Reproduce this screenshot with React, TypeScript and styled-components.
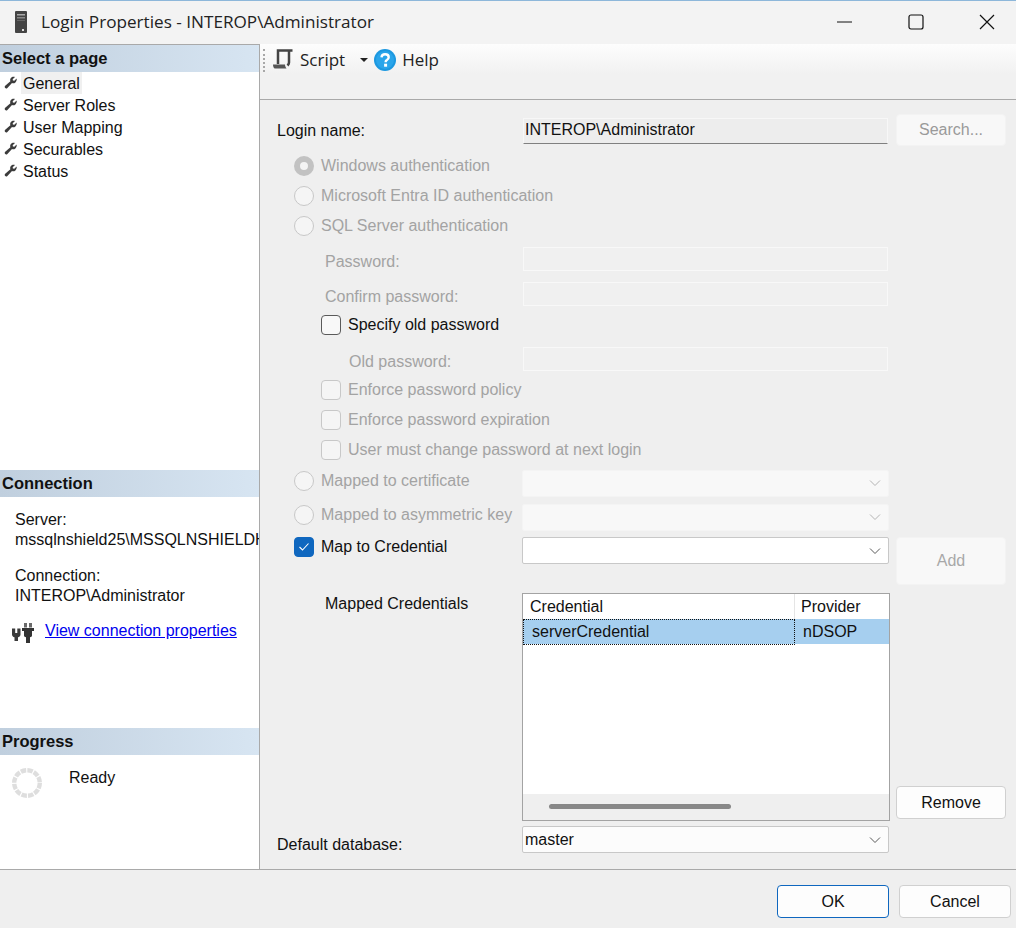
import React from "react";
import styled, { createGlobalStyle } from "styled-components";

const GlobalStyle = createGlobalStyle`
  html, body {
    margin: 0;
    padding: 0;
    background: #efefef;
  }
  * {
    box-sizing: border-box;
  }
`;

const PAGES = ["General", "Server Roles", "User Mapping", "Securables", "Status"];

function WrenchIcon() {
  return (
    <svg width="14" height="14" viewBox="0 0 14 14">
      <path
        d="M12.6 2.6 10.3 4.8 8.9 4.6 8.7 3.3 11 1.1C9.5.5 7.8.9 6.9 2 6.1 3 6 4.2 6.4 5.3L1.2 9.8C.5 10.5.6 11.5 1.2 12.1 1.8 12.7 2.8 12.7 3.4 12L8 7.1C9.2 7.5 10.5 7.2 11.4 6.4 12.5 5.4 13 3.9 12.6 2.6Z"
        fill="#3c3c3c"
      />
    </svg>
  );
}

function ServerIcon() {
  return (
    <svg width="14" height="24" viewBox="0 0 14 24">
      <rect x="1" y="1" width="12" height="22" rx="1" fill="#444" />
      <rect x="3" y="4" width="8" height="1.5" fill="#aaa" />
      <rect x="3" y="7" width="8" height="1.5" fill="#888" />
      <rect x="3" y="10" width="8" height="1" fill="#666" />
      <rect x="8" y="19" width="2" height="2" fill="#ddd" />
    </svg>
  );
}

function ScriptIcon() {
  return (
    <svg width="22" height="22" viewBox="0 0 22 22">
      <path d="M6 15V1.500H20.500" fill="none" stroke="#444" strokeWidth="2.500" />
      <path d="M17 2V13.500C17 14.500 16.500 15.500 15.500 16.500" fill="none" stroke="#444" strokeWidth="2.500" />
      <path d="M1 15.500H13C13 17 13.500 18 14.500 19.500H3C1.800 19.500 1 17.500 1 15.500Z" fill="#555" />
    </svg>
  );
}

function HelpIcon() {
  return (
    <svg width="22" height="22" viewBox="0 0 22 22">
      <circle cx="11" cy="11" r="11" fill="#1c98e0" />
      <circle cx="11" cy="11" r="9" fill="#2aa5ea" />
      <path
        d="M7.500 8.300C7.700 6.300 9.200 5.200 11.100 5.200 13.200 5.200 14.700 6.400 14.700 8.200 14.700 9.500 14 10.300 12.900 11 11.900 11.600 11.600 12.100 11.600 13.200"
        fill="none"
        stroke="#fff"
        strokeWidth="2.400"
      />
      <rect x="10.100" y="14.700" width="3" height="3" fill="#fff" />
    </svg>
  );
}

function PlugIcon() {
  return (
    <svg width="24" height="24" viewBox="0 0 24 24">
      <path
        d="M1 9.500H4.200V14H6.300V9.500H9.500V15.500C9.500 17 8.500 18 7 18.300V22H3.500V18.300C2 18 1 17 1 15.500Z"
        fill="#3a3a3a"
      />
      <rect x="13" y="4" width="3" height="4.500" fill="#6a6a6a" />
      <rect x="18" y="4" width="3" height="4.500" fill="#6a6a6a" />
      <path d="M11 9H23V12H21V16.500C21 17.500 20 18 19 18.200V24H15V18.200C14 18 13 17.500 13 16.500V12H11Z" fill="#333" />
    </svg>
  );
}

function SpinnerIcon() {
  return (
    <svg width="32" height="32" viewBox="0 0 32 32">
      <circle cx="16" cy="16" r="12.800" fill="none" stroke="#dedede" strokeWidth="4.400" strokeDasharray="5.500 1.200" />
    </svg>
  );
}

function Chevron({ light }: { light?: boolean }) {
  return (
    <ChevronSvg width="12" height="8" viewBox="0 0 12 8">
      <path d="M1 1.500 6 6.500 11 1.500" fill="none" stroke={light ? "#b4b4b4" : "#5a5a5a"} strokeWidth="1" />
    </ChevronSvg>
  );
}

function PanelHeading({ children }: { children: React.ReactNode }) {
  return <Heading>{children}</Heading>;
}

function RadioRow({ label, checked }: { label: string; checked?: boolean }) {
  return (
    <Row $h={30}>
      <OptionLabel $indent={17}>
        <Radio $checked={checked} />
        <MutedText>{label}</MutedText>
      </OptionLabel>
    </Row>
  );
}

function CheckRow({ label }: { label: string }) {
  return (
    <Row $h={30}>
      <OptionLabel $indent={44}>
        <CheckBox $muted />
        <MutedText>{label}</MutedText>
      </OptionLabel>
    </Row>
  );
}

function PasswordRow({ label, top, indent }: { label: string; top: number; indent: number }) {
  return (
    <Row $h={24} $top={top}>
      <FieldLabel $indent={indent} $muted $nudge={6}>
        {label}
      </FieldLabel>
      <DisabledInput />
    </Row>
  );
}

export default function App() {
  return (
    <>
      <GlobalStyle />
      <Window>
        <TitleBar>
          <TitleIcon>
            <ServerIcon />
          </TitleIcon>
          <TitleText>Login Properties - INTEROP\Administrator</TitleText>
          <WindowControls>
            <ControlButton>
              <svg width="16" height="16" viewBox="0 0 16 16">
                <path d="M0 8H15" stroke="#111" strokeWidth="1" />
              </svg>
            </ControlButton>
            <ControlButton>
              <svg width="16" height="16" viewBox="0 0 16 16">
                <rect x="1" y="1" width="14" height="14" rx="2" fill="none" stroke="#111" strokeWidth="1.200" />
              </svg>
            </ControlButton>
            <ControlButton>
              <svg width="16" height="16" viewBox="0 0 16 16">
                <path d="M1 1 15 15M15 1 1 15" stroke="#111" strokeWidth="1.200" />
              </svg>
            </ControlButton>
          </WindowControls>
        </TitleBar>

        <Body>
          <Sidebar>
            <SelectSection>
              <PanelHeading>Select a page</PanelHeading>
              <PageList>
                {PAGES.map((page, i) => (
                  <PageItem key={page}>
                    <WrenchIcon />
                    <PageName $active={i === 0}>{page}</PageName>
                  </PageItem>
                ))}
              </PageList>
            </SelectSection>

            <ConnectionSection>
              <PanelHeading>Connection</PanelHeading>
              <ConnectionInfo>
                <InfoLine>Server:</InfoLine>
                <InfoLine>mssqlnshield25\MSSQLNSHIELDHSM</InfoLine>
                <InfoGap />
                <InfoLine>Connection:</InfoLine>
                <InfoLine>INTEROP\Administrator</InfoLine>
              </ConnectionInfo>
              <LinkRow>
                <PlugIcon />
                <ConnectionLink href="#">View connection properties</ConnectionLink>
              </LinkRow>
            </ConnectionSection>

            <ProgressSection>
              <PanelHeading>Progress</PanelHeading>
              <ProgressRow>
                <SpinnerIcon />
                <ReadyText>Ready</ReadyText>
              </ProgressRow>
            </ProgressSection>
          </Sidebar>

          <Main>
            <Toolbar>
              <Grip />
              <ToolIcon>
                <ScriptIcon />
              </ToolIcon>
              <ToolText>Script</ToolText>
              <Caret />
              <ToolIcon>
                <HelpIcon />
              </ToolIcon>
              <ToolText>Help</ToolText>
            </Toolbar>

            <Form>
              <Row $h={32}>
                <FieldLabel $indent={0} $nudge={2}>
                  Login name:
                </FieldLabel>
                <LoginInput>INTEROP\Administrator</LoginInput>
                <SideButton $disabled>Search...</SideButton>
              </Row>

              <RadioGroup>
                <RadioRow label="Windows authentication" checked />
                <RadioRow label="Microsoft Entra ID authentication" />
                <RadioRow label="SQL Server authentication" />
              </RadioGroup>

              <PasswordRow label="Password:" top={6} indent={48} />
              <PasswordRow label="Confirm password:" top={11} indent={48} />

              <Row $h={30} $top={4}>
                <OptionLabel $indent={44}>
                  <CheckBox />
                  <DarkText>Specify old password</DarkText>
                </OptionLabel>
              </Row>

              <PasswordRow label="Old password:" top={7} indent={72} />

              <CheckGroup>
                <CheckRow label="Enforce password policy" />
                <CheckRow label="Enforce password expiration" />
                <CheckRow label="User must change password at next login" />
              </CheckGroup>

              <Row $h={28} $top={4}>
                <OptionLabel $indent={17} $raise>
                  <Radio />
                  <MutedText>Mapped to certificate</MutedText>
                </OptionLabel>
                <Combo $disabled>
                  <Chevron light />
                </Combo>
              </Row>

              <Row $h={28} $top={6}>
                <OptionLabel $indent={17} $raise>
                  <Radio />
                  <MutedText>Mapped to asymmetric key</MutedText>
                </OptionLabel>
                <Combo $disabled>
                  <Chevron light />
                </Combo>
              </Row>

              <CredentialRow>
                <OptionLabel $indent={17}>
                  <CheckBox $checked>
                    <svg width="12" height="10" viewBox="0 0 12 10">
                      <path d="M1.500 5 4.500 8 10.500 1.500" fill="none" stroke="#fff" strokeWidth="1.100" />
                    </svg>
                  </CheckBox>
                  <DarkText>Map to Credential</DarkText>
                </OptionLabel>
                <Combo>
                  <Chevron />
                </Combo>
                <AddButton>Add</AddButton>
              </CredentialRow>

              <ListRow>
                <ListLabel>Mapped Credentials</ListLabel>
                <CredentialGrid>
                  <GridHeader>
                    <HeaderCell $first>Credential</HeaderCell>
                    <HeaderCell>Provider</HeaderCell>
                  </GridHeader>
                  <GridRow>
                    <SelectedCell $focus>serverCredential</SelectedCell>
                    <SelectedCell>nDSOP</SelectedCell>
                  </GridRow>
                  <GridSpace />
                  <ScrollTrack>
                    <ScrollThumb />
                  </ScrollTrack>
                </CredentialGrid>
                <RemoveButton>Remove</RemoveButton>
              </ListRow>

              <Row $h={28} $top={3}>
                <FieldLabel $indent={0} $nudge={12}>
                  Default database:
                </FieldLabel>
                <Combo $value>
                  <span>master</span>
                  <Chevron />
                </Combo>
              </Row>
            </Form>
          </Main>
        </Body>

        <Footer>
          <FooterButton $primary>OK</FooterButton>
          <FooterButton>Cancel</FooterButton>
        </Footer>
      </Window>
    </>
  );
}

const Window = styled.div`
  width: 1016px;
  height: 928px;
  display: flex;
  flex-direction: column;
  overflow: hidden;
  background: #efefef;
  color: #111;
  font-family: "Liberation Sans", Arial, sans-serif;
  font-size: 16px;
`;

const TitleBar = styled.div`
  height: 44px;
  flex: none;
  padding-bottom: 2px;
  display: flex;
  align-items: center;
  background: #f3f3f3;
  border-top: 1px solid #8db7da;
`;

const TitleIcon = styled.div`
  width: 41px;
  display: flex;
  justify-content: center;
`;

const TitleText = styled.div`
  font-family: "Open Sans", sans-serif;
  font-size: 17.15px;
  color: #222;
`;

const WindowControls = styled.div`
  margin-left: auto;
  display: flex;
  padding-right: 21px;
  gap: 55px;
`;

const ControlButton = styled.div`
  width: 16px;
  height: 16px;
  display: flex;
`;

const Body = styled.div`
  height: 826px;
  flex: none;
  display: flex;
`;

const Sidebar = styled.div`
  width: 260px;
  flex: none;
  display: flex;
  flex-direction: column;
  background: #fff;
  border-top: 1px solid #a9a9a9;
  border-right: 1px solid #a9a9a9;
  border-bottom: 1px solid #a9a9a9;
`;

const SelectSection = styled.section`
  height: 425px;
  flex: none;
`;

const ConnectionSection = styled.section`
  height: 258px;
  flex: none;
`;

const ProgressSection = styled.section`
  flex: 1;
`;

const Heading = styled.div`
  height: 27px;
  padding-left: 2px;
  display: flex;
  align-items: center;
  font-weight: 700;
  font-size: 16.5px;
  color: #111;
  background: linear-gradient(to right, #c0cfde, #d7e5f2);
`;

const PageList = styled.div`
  display: flex;
  flex-direction: column;
`;

const PageItem = styled.div`
  height: 22px;
  padding-left: 4px;
  display: flex;
  align-items: center;
  gap: 3px;
`;

const PageName = styled.span<{ $active?: boolean }>`
  height: 22px;
  line-height: 24px;
  padding: 0 2px;
  background: ${(props) => (props.$active ? "#f0f0f0" : "transparent")};
`;

const ConnectionInfo = styled.div`
  padding: 13px 0 0 15px;
  white-space: nowrap;
  overflow: hidden;
`;

const InfoLine = styled.div`
  height: 20px;
  line-height: 20px;
`;

const InfoGap = styled.div`
  height: 16px;
`;

const LinkRow = styled.div`
  margin-top: 13px;
  padding-left: 11px;
  display: flex;
  align-items: center;
  gap: 10px;
`;

const ConnectionLink = styled.a`
  color: #0000ee;
  text-decoration: underline;
`;

const ProgressRow = styled.div`
  padding: 12px 0 0 11px;
  display: flex;
  align-items: flex-start;
  gap: 26px;
`;

const ReadyText = styled.span`
  line-height: 22px;
`;

const Main = styled.div`
  flex: 1;
  display: flex;
  flex-direction: column;
  min-width: 0;
`;

const Toolbar = styled.div`
  height: 56px;
  flex: none;
  padding: 5px 0 0 3px;
  display: flex;
  align-items: flex-start;
  border-bottom: 1px solid #a9a9a9;
  background: linear-gradient(to bottom, #fdfdfd, #f1f1f1 55%, #f1f1f1);
`;

const Grip = styled.div`
  width: 1px;
  height: 23px;
  margin-right: 7px;
  border-left: 2px dotted #a8a8a8;
`;

const ToolIcon = styled.div`
  width: 22px;
  height: 22px;
`;

const ToolText = styled.span`
  margin-left: 6px;
  font-family: "Open Sans", sans-serif;
  font-size: 17px;
  line-height: 22px;
  color: #222;
`;

const Caret = styled.div`
  width: 0;
  height: 0;
  margin: 9px 6px 0 15px;
  border-left: 4px solid transparent;
  border-right: 4px solid transparent;
  border-top: 4px solid #222;
`;

const Form = styled.div`
  flex: 1;
  padding: 14px 10px 0 17px;
  border-bottom: 1px solid #a9a9a9;
`;

const Row = styled.div<{ $h: number; $top?: number }>`
  height: ${(props) => props.$h}px;
  margin-top: ${(props) => props.$top ?? 0}px;
  display: grid;
  grid-template-columns: 238px 365px 110px;
  column-gap: 8px;
  align-items: center;
`;

const RadioGroup = styled.div`
  margin-top: 5px;
`;

const CheckGroup = styled.div`
  margin-top: 4px;
`;

const FieldLabel = styled.div<{ $indent: number; $muted?: boolean; $nudge?: number }>`
  padding-left: ${(props) => props.$indent}px;
  padding-top: ${(props) => props.$nudge ?? 2}px;
  color: ${(props) => (props.$muted ? "#a3a3a3" : "#111")};
  white-space: nowrap;
`;

const OptionLabel = styled.label<{ $indent: number; $raise?: boolean }>`
  padding-left: ${(props) => props.$indent}px;
  padding-bottom: ${(props) => (props.$raise ? "4px" : "0")};
  display: flex;
  align-items: center;
  gap: 7px;
  white-space: nowrap;
  grid-column: 1;
`;

const MutedText = styled.span`
  color: #a3a3a3;
`;

const DarkText = styled.span`
  color: #111;
`;

const Radio = styled.span<{ $checked?: boolean }>`
  width: 20px;
  height: 20px;
  flex: none;
  border-radius: 50%;
  background: ${(props) => (props.$checked ? "#f4f4f4" : "#f5f5f5")};
  border: ${(props) => (props.$checked ? "6px solid #c2c2c2" : "1px solid #c8c8c8")};
`;

const CheckBox = styled.span<{ $checked?: boolean; $muted?: boolean }>`
  width: 20px;
  height: 20px;
  flex: none;
  display: flex;
  align-items: center;
  justify-content: center;
  border-radius: 4px;
  background: ${(props) => (props.$checked ? "#0f67bf" : props.$muted ? "#f5f5f5" : "#f8f8f8")};
  border: 1px solid
    ${(props) => (props.$checked ? "#0f67bf" : props.$muted ? "#c8c8c8" : "#5a5a5a")};
`;

const LoginInput = styled.div`
  height: 26px;
  padding: 0 1px;
  line-height: 21px;
  background: #ededed;
  border: 1px solid #f7f7f7;
  border-bottom: 1px solid #808080;
  margin-top: 2px;
  color: #111;
`;

const DisabledInput = styled.div`
  height: 24px;
  background: #f0f0f0;
  border: 1px solid #f8f8f8;
`;

const Combo = styled.div<{ $disabled?: boolean; $value?: boolean }>`
  height: 27px;
  margin: 0 -1px;
  padding: ${(props) => (props.$value ? "2px" : "0")} 7px 0 2px;
  display: flex;
  align-items: center;
  justify-content: ${(props) => (props.$value ? "space-between" : "flex-end")};
  border-radius: 2px;
  background: ${(props) => (props.$disabled ? "#f8f8f8" : props.$value ? "#fcfcfc" : "#fff")};
  border: 1px solid ${(props) => (props.$disabled ? "#f4f4f4" : "#c8c8c8")};
`;

const ChevronSvg = styled.svg`
  flex: none;
`;

const buttonBase = `
  display: flex;
  align-items: center;
  justify-content: center;
  border-radius: 4px;
`;

const SideButton = styled.div<{ $disabled?: boolean }>`
  ${buttonBase}
  height: 32px;
  background: #f8f8f8;
  border: 1px solid #f3f3f3;
  color: #9a9a9a;
`;

const CredentialRow = styled.div`
  height: 48px;
  margin-top: 6px;
  display: grid;
  grid-template-columns: 238px 365px 110px;
  column-gap: 8px;
  align-items: start;
`;

const AddButton = styled(SideButton)`
  height: 48px;
  color: #a8a8a8;
`;

const ListRow = styled.div`
  height: 228px;
  margin-top: 8px;
  display: grid;
  grid-template-columns: 240px 367px 110px;
  column-gap: 6px;
  align-items: start;
`;

const ListLabel = styled.div`
  padding: 2px 0 0 48px;
  color: #111;
`;

const CredentialGrid = styled.div`
  height: 228px;
  margin-left: -1px;
  display: flex;
  flex-direction: column;
  background: #fff;
  border: 1px solid #a3a3a3;
`;

const GridHeader = styled.div`
  height: 25px;
  flex: none;
  display: grid;
  grid-template-columns: 272px 1fr;
`;

const HeaderCell = styled.div<{ $first?: boolean }>`
  padding-left: ${(props) => (props.$first ? "7px" : "6px")};
  line-height: 26px;
  border-right: ${(props) => (props.$first ? "1px solid #e5e5e5" : "none")};
  border-bottom: 1px solid #f0f0f0;
`;

const GridRow = styled.div`
  height: 26px;
  flex: none;
  display: grid;
  grid-template-columns: 272px 1fr;
  background: #a6cfef;
  border-bottom: 1px solid #fff;
`;

const SelectedCell = styled.div<{ $focus?: boolean }>`
  padding-left: ${(props) => (props.$focus ? "9px" : "8px")};
  line-height: 26px;
  color: #111;
  outline: ${(props) => (props.$focus ? "1px dotted #111" : "none")};
  outline-offset: -1px;
`;

const GridSpace = styled.div`
  flex: 1;
`;

const ScrollTrack = styled.div`
  height: 26px;
  flex: none;
  padding: 10px 0 0 26px;
  background: #efefef;
`;

const ScrollThumb = styled.div`
  width: 182px;
  height: 5px;
  border-radius: 3px;
  background: #888;
`;

const RemoveButton = styled.div`
  ${buttonBase}
  grid-column: 3;
  height: 33px;
  align-self: end;
  margin-bottom: 2px;
  background: #fdfdfd;
  border: 1px solid #d0d0d0;
  color: #111;
`;

const Footer = styled.div`
  flex: 1;
  padding: 15px 5px 0 0;
  display: flex;
  justify-content: flex-end;
  align-items: flex-start;
  gap: 10px;
`;

const FooterButton = styled.div<{ $primary?: boolean }>`
  ${buttonBase}
  width: 112px;
  height: 33px;
  background: #fdfdfd;
  color: #111;
  border: 1px solid ${(props) => (props.$primary ? "#0f67bf" : "#d0d0d0")};
`;
